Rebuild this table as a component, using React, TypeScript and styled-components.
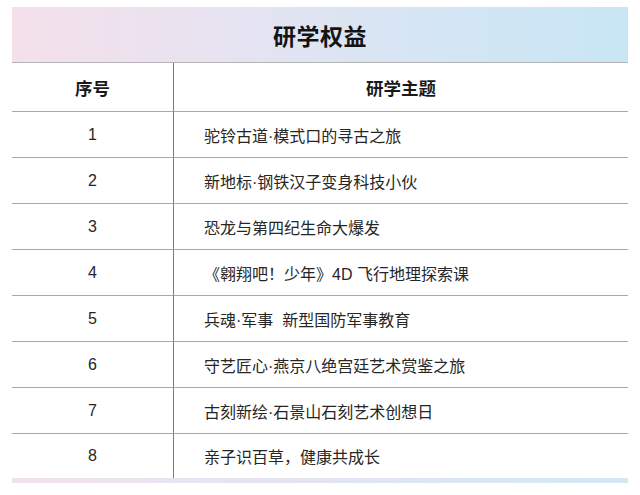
import React from "react";
import styled, { createGlobalStyle } from "styled-components";

const GlobalStyle = createGlobalStyle`
  html, body {
    margin: 0;
    padding: 0;
    background: #ffffff;
  }
  body {
    font-family: "Liberation Sans", "Noto Sans CJK SC", sans-serif;
    color: #222222;
  }
`;

const topics = [
  "驼铃古道·模式口的寻古之旅",
  "新地标·钢铁汉子变身科技小伙",
  "恐龙与第四纪生命大爆发",
  "《翱翔吧！少年》4D 飞行地理探索课",
  "兵魂·军事  新型国防军事教育",
  "守艺匠心·燕京八绝宫廷艺术赏鉴之旅",
  "古刻新绘·石景山石刻艺术创想日",
  "亲子识百草，健康共成长",
];

const Page = styled.div`
  width: 640px;
  height: 495px;
  padding-top: 7px;
  box-sizing: border-box;
`;

const Table = styled.div`
  width: 616px;
  margin: 0 auto 0 12px;
`;

const TitleBar = styled.div`
  height: 56px;
  display: flex;
  align-items: center;
  justify-content: center;
  background: linear-gradient(
    90deg,
    #f4e0ea 0%,
    #e7e3f1 35%,
    #d6e5f4 65%,
    #c8e6f5 100%
  );
  border-bottom: 1px solid #b4b4b4;
  box-sizing: border-box;
  font-size: 23px;
  font-weight: 700;
  color: #141414;
  letter-spacing: 0.5px;
`;

const Grid = styled.div`
  display: grid;
  grid-template-columns: 162px 1fr;
`;

const Cell = styled.div<{ $head?: boolean; $first?: boolean; $last?: boolean; $align?: "center" | "left" }>`
  height: ${(p) => (p.$head ? 49 : p.$last ? 44 : 46)}px;
  box-sizing: border-box;
  display: flex;
  align-items: center;
  justify-content: ${(p) => (p.$align === "left" ? "flex-start" : "center")};
  padding-left: ${(p) => (p.$align === "left" ? "30px" : "0")};
  border-bottom: ${(p) => (p.$last ? "none" : "1.5px solid #a9a9a9")};
  border-right: ${(p) => (p.$first ? "1px solid #7c7c7c" : "none")};
  font-size: ${(p) => (p.$head ? "17.5px" : "16px")};
  font-weight: ${(p) => (p.$head ? 700 : 400)};
  color: ${(p) => (p.$head ? "#1a1a1a" : "#262626")};
  white-space: pre;
`;

const BottomBar = styled.div`
  height: 5px;
  background: linear-gradient(90deg, #f1e2ec 0%, #e4e4f2 45%, #d3e8f3 100%);
`;

export default function App() {
  return (
    <>
      <GlobalStyle />
      <Page>
        <Table>
          <TitleBar>研学权益</TitleBar>
          <Grid>
            <Cell $head $first>序号</Cell>
            <Cell $head>研学主题</Cell>
            {topics.map((t, i) => {
              const last = i === topics.length - 1;
              return (
                <React.Fragment key={i}>
                  <Cell $first $last={last}>{i + 1}</Cell>
                  <Cell $last={last} $align="left">{t}</Cell>
                </React.Fragment>
              );
            })}
          </Grid>
          <BottomBar />
        </Table>
      </Page>
    </>
  );
}
